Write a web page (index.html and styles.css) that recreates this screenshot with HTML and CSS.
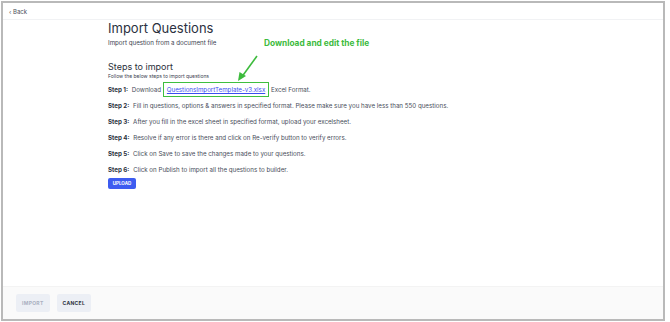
FILE: index.html
```html
<!DOCTYPE html>
<html lang="en">
<head>
  <meta charset="UTF-8">
  <title>Import Questions</title>
  <link rel="stylesheet" href="styles.css">
</head>
<body>
  <div class="frame">
    <div class="top-bar">
      <a href="javascript:;" class="back">&lsaquo; Back</a>
    </div>
    <div class="main">
      <div class="content">
        <h1 class="title">Import Questions</h1>
        <p class="sub">Import question from a document file</p>

        <h2 class="steps-title">Steps to import</h2>
        <p class="steps-sub">Follow the below steps to import questions</p>

        <ul class="steps">
          <li><b>Step 1:</b> Download <span class="hl"><a href="javascript:;" class="file">QuestionsImportTemplate-v3.xlsx</a></span> Excel Format.</li>
          <li><b>Step 2:</b> Fill in questions, options &amp; answers in specified format. Please make sure you have less than 550 questions.</li>
          <li><b>Step 3:</b> After you fill in the excel sheet in specified format, upload your excelsheet.</li>
          <li><b>Step 4:</b> Resolve if any error is there and click on Re-verify button to verify errors.</li>
          <li><b>Step 5:</b> Click on Save to save the changes made to your questions.</li>
          <li><b>Step 6:</b> Click on Publish to import all the questions to builder.</li>
        </ul>
        <button class="upload">UPLOAD</button>

        <!-- annotation -->
        <div class="note">Download and edit the file</div>
        <svg class="arrow" width="24" height="28" viewBox="0 0 24 28">
          <path d="M21 1 L5 23" stroke="#3dbb3d" stroke-width="1.6" fill="none"/>
          <path d="M2 26 L3.5 17 L10 21 Z" fill="#3dbb3d"/>
        </svg>
      </div>
    </div>
    <div class="footer">
      <button class="btn disabled">IMPORT</button>
      <button class="btn">CANCEL</button>
    </div>
  </div>
</body>
</html>
```

FILE: styles.css
```css
body {
  margin: 0;
  font-family: Inter, "Noto Sans", sans-serif;
  color: #2a2f3a;
}
a {
  text-decoration: none;
  color: inherit;
}
.frame {
  width: 660px;
  height: 316px;
  margin: 1px 0 0 1px;
  border: 2px solid #b9b9b9;
  display: flex;
  flex-direction: column;
  background: #fff;
}
.top-bar {
  height: 15px;
  border-bottom: 1px solid #f1f2f4;
  display: flex;
  align-items: center;
  padding: 1px 0 0 6px;
}
.back {
  font-size: 6px;
  color: #4a4f5a;
}
.main {
  flex: 1;
}
.content {
  position: relative;
  padding-left: 105px;
}
.title {
  margin: 0;
  font-size: 13px;
  font-weight: 400;
  line-height: 16px;
  color: #2b3140;
}
.sub {
  margin: 2px 0 0;
  font-size: 6.2px;
  line-height: 9px;
  color: #3c4250;
}
.steps-title {
  margin: 14px 0 0;
  font-size: 9px;
  font-weight: 400;
  line-height: 11px;
}
.steps-sub {
  margin: 1px 0 0;
  font-size: 5px;
  line-height: 7px;
  color: #3c4250;
}
.steps {
  list-style: none;
  margin: 2px 0 0;
  padding: 0;
}
.steps li {
  font-size: 6.2px;
  line-height: 16px;
  height: 16px;
  color: #474d5a;
}
.steps b {
  color: #2b3140;
  margin-right: 2px;
}
.hl {
  display: inline-block;
  border: 1.5px solid #3fbf3f;
  padding: 2px 3px;
  line-height: 9px;
}
.file {
  color: #3b4ef0;
  text-decoration: underline;
}
.upload {
  display: block;
  margin-top: 0;
  width: 28px;
  height: 11px;
  border: 0;
  border-radius: 2px;
  background: #3d5cf0;
  color: #fff;
  font: 700 4.5px Inter, sans-serif;
  padding: 0;
}
.note {
  position: absolute;
  left: 261px;
  top: 18px;
  font-size: 8.3px;
  font-weight: 700;
  color: #3dbb3d;
}
.arrow {
  position: absolute;
  left: 233px;
  top: 35px;
}
.footer {
  height: 32px;
  background: #fafafa;
  border-top: 1px solid #f3f3f3;
  display: flex;
  align-items: center;
  gap: 7px;
  padding-left: 13px;
}
.btn {
  height: 18px;
  padding: 0 6px;
  border: 0;
  border-radius: 2px;
  background: #eceff5;
  color: #2b3140;
  font: 700 5px Inter, sans-serif;
  letter-spacing: 0.3px;
}
.btn.disabled {
  color: #a9b0c0;
}
```
